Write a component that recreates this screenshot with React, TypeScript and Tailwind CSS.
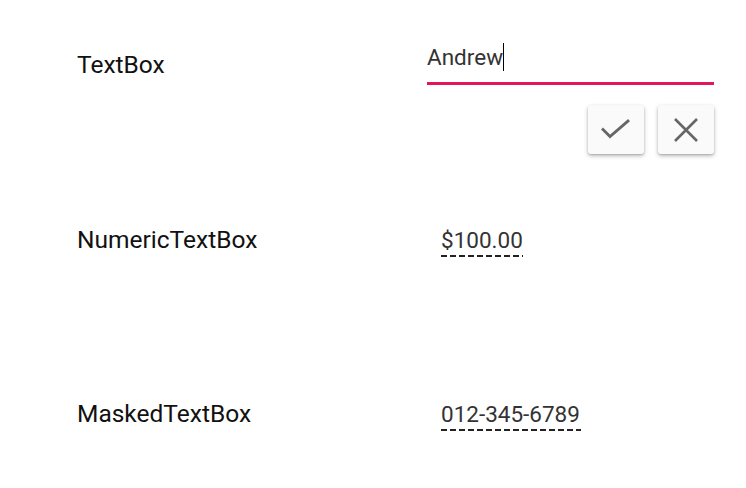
import React from 'react';

const dashed = 'h-[2px] bg-[repeating-linear-gradient(to_right,#222_0_6px,transparent_6px_9px)]';

const CheckIcon = () => (
  <svg width="30" height="24" viewBox="0 0 30 24" fill="none">
    <path d="M2 11.5 L9 18.5 L27 3" stroke="#666" strokeWidth="2.8" strokeLinecap="square" />
  </svg>
);

const CloseIcon = () => (
  <svg width="26" height="26" viewBox="0 0 26 26" fill="none">
    <path d="M2 2 L24 24 M24 2 L2 24" stroke="#666" strokeWidth="2.6" />
  </svg>
);

const ActionButton = ({ children }: { children: React.ReactNode }) => (
  <button
    type="button"
    className="w-[56px] h-[49px] flex items-center justify-center rounded-[3px] bg-[#fafafa] shadow-[0_2px_4px_rgba(0,0,0,0.25),0_1px_2px_rgba(0,0,0,0.15)]"
  >
    {children}
  </button>
);

const App = () => {
  return (
    <div
      className="w-[746px] h-[488px] bg-white pl-[77px] pt-[41px]"
      style={{ fontFamily: 'Roboto, "Liberation Sans", sans-serif' }}
    >
      {/* TextBox row */}
      <div className="flex h-[175px]">
        <div className="w-[350px] pt-[9px] text-[24.5px] leading-[30px] text-[#111]">TextBox</div>
        <div className="w-[287px]">
          <div className="h-[44px] border-b-[3px] border-[#e3165b] flex items-start pt-[1px]">
            <span className="text-[22.5px] leading-[30px] text-[#333]">Andrew</span>
            <span className="w-[1px] h-[28px] bg-black mt-[1px]" />
          </div>
          <div className="flex justify-end gap-[14px] mt-[20px]">
            <ActionButton>
              <CheckIcon />
            </ActionButton>
            <ActionButton>
              <CloseIcon />
            </ActionButton>
          </div>
        </div>
      </div>

      {/* NumericTextBox row */}
      <div className="flex h-[174px] pt-[9px]">
        <div className="w-[364px] text-[24.5px] leading-[30px] text-[#111]">NumericTextBox</div>
        <div className="flex flex-col items-start">
          <span className="text-[22.5px] leading-[30px] text-[#333]">$100.00</span>
          <div className={`w-[82px] mt-[0px] ${dashed}`} />
        </div>
      </div>

      {/* MaskedTextBox row */}
      <div className="flex pt-[9px]">
        <div className="w-[364px] text-[24.5px] leading-[30px] text-[#111]">MaskedTextBox</div>
        <div className="flex flex-col items-start">
          <span className="text-[22.5px] leading-[30px] text-[#333]">012-345-6789</span>
          <div className={`w-[140px] mt-[0px] ${dashed}`} />
        </div>
      </div>
    </div>
  );
};

export default App;
